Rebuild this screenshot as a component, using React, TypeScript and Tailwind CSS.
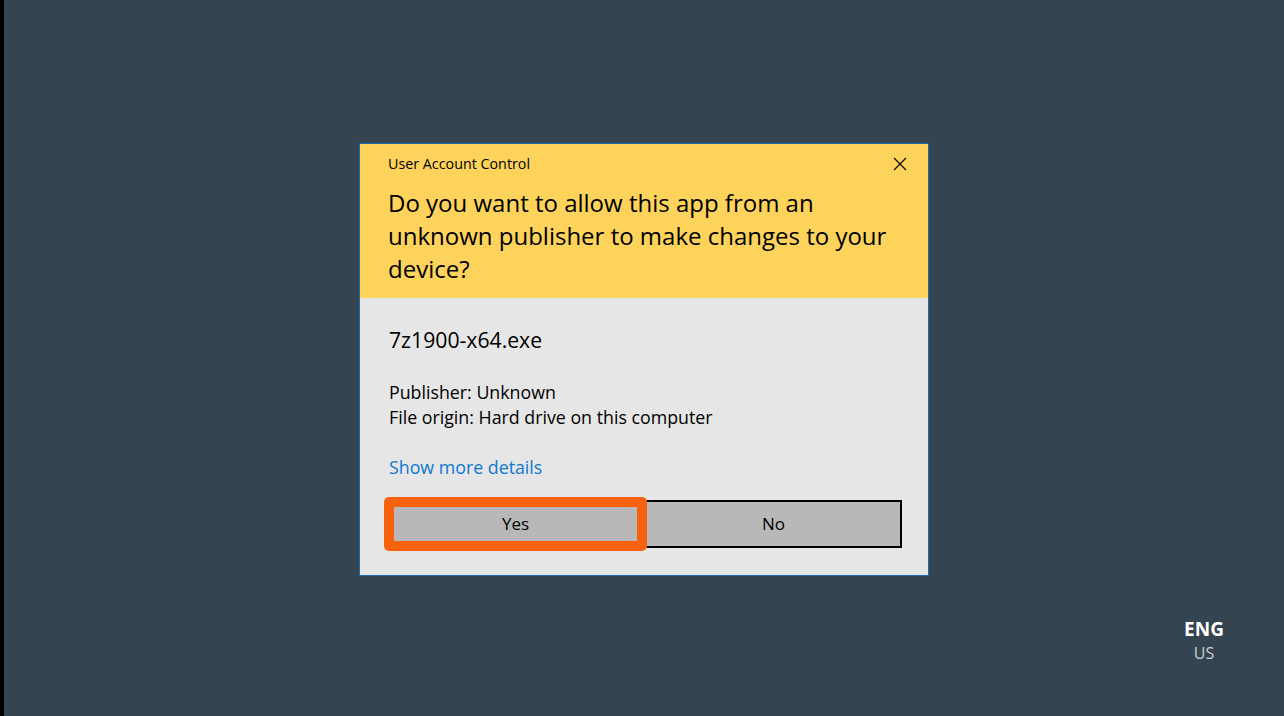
export default function App() {
  return (
    <div
      className="relative flex h-[716px] w-[1284px] overflow-hidden bg-[#344450]"
      style={{ fontFamily: '"Open Sans", "Noto Sans", sans-serif' }}
    >
      <div className="w-[4px] shrink-0 bg-black" />
      <div className="flex flex-1 items-start justify-center pt-[143px]">
        <div className="w-[570px] border border-[#1b6bb3] bg-[#e6e6e6]">
          <div className="bg-[#fed35b] pl-[28px] pr-[20px] pt-[10px] pb-[13px] text-black">
            <div className="flex items-center justify-between">
              <span className="text-[14.3px] leading-[20px]">User Account Control</span>
              <svg width="14" height="14" viewBox="0 0 14 14" className="mr-[1px]">
                <path d="M1 1 L13 13 M13 1 L1 13" stroke="#111" strokeWidth="1.3" fill="none" />
              </svg>
            </div>
            <h1 className="mt-[12px] w-[505px] text-[24px] leading-[33px] font-normal">
              Do you want to allow this app from an unknown publisher to make changes to your device?
            </h1>
          </div>
          <div className="pl-[29px] pr-[26px] pb-[24px] text-black">
            <div className="mt-[28px] text-[21.2px] leading-[28px]">7z1900-x64.exe</div>
            <div className="mt-[26px] text-[17.8px] leading-[25px]">
              <div>Publisher: Unknown</div>
              <div>File origin: Hard drive on this computer</div>
            </div>
            <div className="mt-[25px] text-[17.8px] leading-[25px] text-[#0e78d2]">
              Show more details
            </div>
            <div className="-ml-[5px] mt-[17px] flex items-center">
              <button className="relative z-10 flex h-[54px] w-[263px] items-center justify-center rounded-[5px] border-[10px] border-[#f7630c] bg-[#b8b8b8] text-[17px] text-black">
                Yes
              </button>
              <button className="-ml-[2px] flex h-[48px] w-[257px] items-center justify-center border-2 border-black bg-[#b8b8b8] text-[17px] text-black">
                No
              </button>
            </div>
          </div>
        </div>
      </div>
      <div className="absolute left-[1164px] top-[616px] flex w-[80px] flex-col items-center">
        <span className="text-[19px] font-bold leading-[26px] text-white">ENG</span>
        <span className="text-[16px] leading-[22px] text-[#c9ced3]">US</span>
      </div>
    </div>
  );
}
